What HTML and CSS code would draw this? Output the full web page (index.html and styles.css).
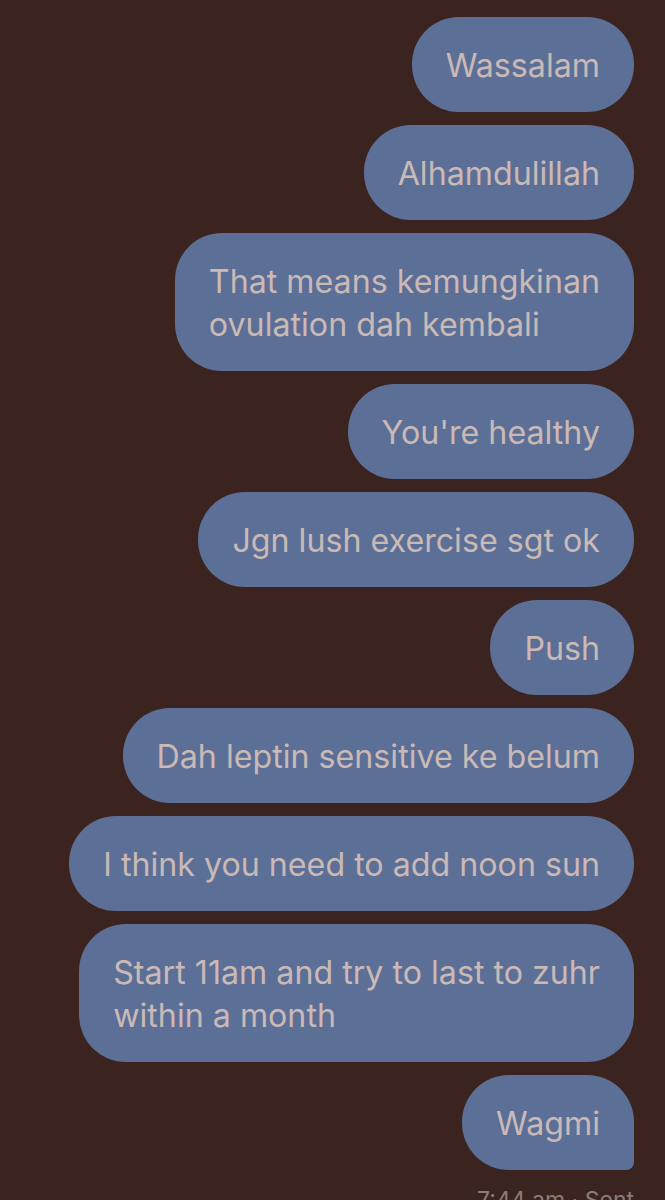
FILE: index.html
```html
<!DOCTYPE html>
<html>
<head>
<meta charset="utf-8">
<link rel="stylesheet" href="styles.css">
</head>
<body>
<div class="chat">
  <div class="msg">Wassalam</div>
  <div class="msg">Alhamdulillah</div>
  <div class="msg">That means kemungkinan<br>ovulation dah kembali</div>
  <div class="msg">You're healthy</div>
  <div class="msg">Jgn lush exercise sgt ok</div>
  <div class="msg">Push</div>
  <div class="msg">Dah leptin sensitive ke belum</div>
  <div class="msg">I think you need to add noon sun</div>
  <div class="msg">Start 11am and try to last to zuhr<br>within a month</div>
  <div class="msg last">Wagmi</div>
  <div class="meta">7:44 am · Sent</div>
</div>
</body>
</html>
```
FILE: styles.css
```css
html, body {
  margin: 0;
  padding: 0;
  background: #3b2420;
  height: 1200px;
  overflow: hidden;
}
.chat {
  display: flex;
  flex-direction: column;
  align-items: flex-end;
  gap: 13px;
  padding: 17px 31px 0 0;
  font-family: Inter, "Noto Sans", sans-serif;
}
.msg {
  background: #5c7097;
  color: #cbb9b6;
  font-size: 32.2px;
  line-height: 43px;
  padding: 27px 34px 25px;
  border-radius: 47px;
}
.msg.last {
  border-bottom-right-radius: 8px;
}
.meta {
  margin-top: 3px;
  color: #8c7b77;
  font-size: 23px;
}
```
